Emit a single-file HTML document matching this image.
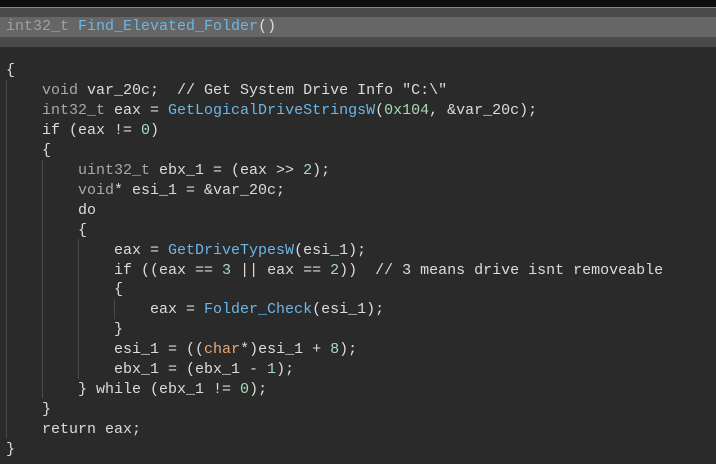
<!DOCTYPE html><html><head><style>
body{margin:0;width:716px;height:464px;background:#2a2a2a;overflow:hidden;position:relative;font-family:"Liberation Mono",monospace;font-size:15px;color:#dcdcdc}
.b0{position:absolute;left:0;top:0;width:716px;height:7px;background:#0e0e0e}
.b1{position:absolute;left:0;top:7px;width:716px;height:1px;background:#8a8a8a}
.b2{position:absolute;left:0;top:8px;width:716px;height:39px;background:#4a4a4a}
.b3{position:absolute;left:0;top:17px;width:716px;height:20px;background:#666}
.hd{position:absolute;left:6px;top:17px;line-height:20px;white-space:pre}
.code{position:absolute;left:6px;top:61px;line-height:19.95px;white-space:pre}
.t{color:#a8a8a8}.f{color:#6cb6e8}.n{color:#a6dcb4}.c{color:#e8a878}
.g{position:absolute;width:1px;background:#4a4a4a}
</style></head><body>
<div class="b0"></div><div class="b1"></div><div class="b2"></div><div class="b3"></div>
<div class="hd"><span style="color:#a0a0a0">int32_t</span> <span class="f">Find_Elevated_Folder</span>()</div>
<div class="g" style="left:6px;top:80px;height:358px"></div>
<div class="g" style="left:42px;top:160px;height:238px"></div>
<div class="g" style="left:78px;top:239px;height:140px"></div>
<div class="g" style="left:114px;top:299px;height:20px"></div>
<div class="code">{
    <span class="t">void</span> var_20c;  // Get System Drive Info "C:\"
    <span class="t">int32_t</span> eax = <span class="f">GetLogicalDriveStringsW</span>(<span class="n">0x104</span>, &amp;var_20c);
    if (eax != <span class="n">0</span>)
    {
        <span class="t">uint32_t</span> ebx_1 = (eax &gt;&gt; <span class="n">2</span>);
        <span class="t">void</span>* esi_1 = &amp;var_20c;
        do
        {
            eax = <span class="f">GetDriveTypesW</span>(esi_1);
            if ((eax == <span class="n">3</span> || eax == <span class="n">2</span>))  // 3 means drive isnt removeable
            {
                eax = <span class="f">Folder_Check</span>(esi_1);
            }
            esi_1 = ((<span class="c">char</span>*)esi_1 + <span class="n">8</span>);
            ebx_1 = (ebx_1 - <span class="n">1</span>);
        } while (ebx_1 != <span class="n">0</span>);
    }
    return eax;
}</div>
</body></html>
